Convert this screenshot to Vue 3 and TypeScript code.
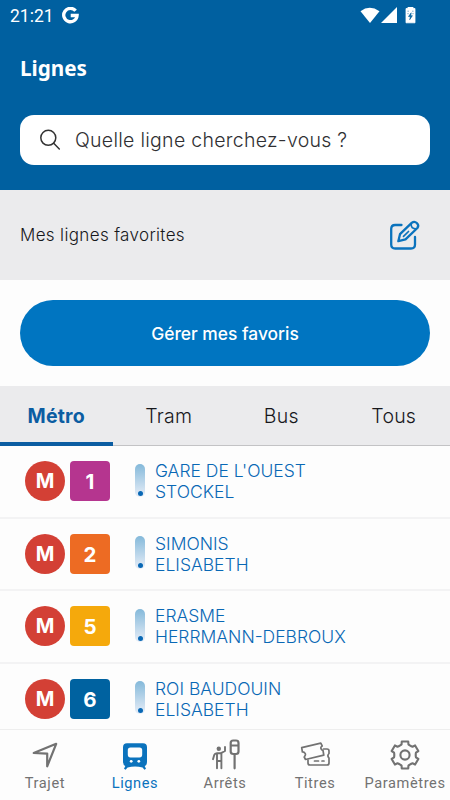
<script setup lang="ts">
import { ref } from 'vue'

interface Line {
  id: string
  color: string
  from: string
  to: string
}

const tabs = ['Métro', 'Tram', 'Bus', 'Tous']
const activeTab = ref('Métro')

const lines: Line[] = [
  { id: '1', color: '#b5358f', from: "GARE DE L'OUEST", to: 'STOCKEL' },
  { id: '2', color: '#ed6b23', from: 'SIMONIS', to: 'ELISABETH' },
  { id: '5', color: '#f5a90c', from: 'ERASME', to: 'HERRMANN-DEBROUX' },
  { id: '6', color: '#0062a0', from: 'ROI BAUDOUIN', to: 'ELISABETH' },
]

// Outline of the six-toothed settings wheel, centred on the origin
function gearPath(): string {
  const profile: [number, number][] = [
    [-24, 10.8], [-18, 11.2], [-13.5, 13.9], [13.5, 13.9], [18, 11.2], [24, 10.8],
  ]
  const points: string[] = []
  for (let tooth = 0; tooth < 6; tooth++) {
    for (const [offset, radius] of profile) {
      const angle = ((tooth * 60 + offset - 90) * Math.PI) / 180
      points.push(`${(radius * Math.cos(angle)).toFixed(2)} ${(radius * Math.sin(angle)).toFixed(2)}`)
    }
  }
  return `M${points.join('L')}Z`
}
const gear = gearPath()
</script>

<template>
  <main class="screen">
    <header class="header">
      <div class="status">
        <span class="clock">21:21</span>
        <svg class="google" viewBox="0 0 16 16" width="17" height="17">
          <path d="M12.8 3.6A6.3 6.3 0 1 0 14.2 8H8.2" fill="none" stroke="#fff" stroke-width="3.1" />
        </svg>
        <svg class="signals" viewBox="0 0 56 18" width="56" height="18">
          <path d="M0.5 4.3Q9.5-2.6 19.5 4.3L10 15.9Z" fill="#fff" />
          <path d="M21 16L37 0V16Z" fill="#fff" />
          <path d="M46 1.5h2V0h5v1.5h2v14.3h-9Z" fill="#fff" stroke="#fff" stroke-width=".8" stroke-linejoin="round" />
          <path d="M51.2 5.8l-2.7 3.7h1.9l-.7 3.2 2.7-4h-1.7ZM47.5 4.2h1.3M52.2 4.2h1.3M48 6v1.2M53 6v1.2" fill="#0062a0" stroke="#0062a0" stroke-width=".6" />
        </svg>
      </div>
      <h1 class="title">Lignes</h1>
      <div class="search">
        <svg viewBox="0 0 22 22" width="22" height="22" fill="none" stroke="#333" stroke-width="1.5" stroke-linecap="round">
          <circle cx="8.3" cy="8.8" r="7.5" />
          <path d="M13.7 14.3L19.3 20" />
        </svg>
        <span>Quelle ligne cherchez-vous ?</span>
      </div>
    </header>

    <section class="favorites">
      <span>Mes lignes favorites</span>
      <svg viewBox="0 0 32 32" width="32" height="32" fill="none" stroke="#0b73bd" stroke-width="2.3" stroke-linecap="round" stroke-linejoin="round">
        <path d="M12.5 6H6.2Q2.2 6 2.2 10V25.5Q2.2 29.5 6.2 29.5H22Q26 29.5 26 25.5V18" />
        <path d="M9.3 22.2L11 15.2L22.7 3.9Q25.3 1.7 27.8 4T28.4 9L16.5 20.4Z" />
        <path d="M22.2 5Q21.7 9.7 27.2 9.9M14.5 17.3L19.5 12.5" stroke-width="1.7" />
      </svg>
    </section>

    <div class="manage">
      <button type="button">Gérer mes favoris</button>
    </div>

    <nav class="tabs">
      <button v-for="tab in tabs" :key="tab" type="button" :class="{ active: tab === activeTab }" @click="activeTab = tab">
        {{ tab }}
      </button>
    </nav>

    <ul class="lines">
      <li v-for="line in lines" :key="line.id">
        <span class="mode">M</span>
        <span class="number" :style="{ background: line.color }">{{ line.id }}</span>
        <span class="direction"><i></i></span>
        <span class="stops">{{ line.from }}<br />{{ line.to }}</span>
      </li>
    </ul>

    <nav class="bottom">
      <a>
        <svg viewBox="0 0 32 32" width="32" height="32" fill="none" stroke="#727272" stroke-width="2.2" stroke-linejoin="round">
          <path d="M4.7 14L27.2 4.8L18.2 27.3V14.6Z" />
        </svg>
        <span>Trajet</span>
      </a>
      <a class="current">
        <svg viewBox="0 0 32 32" width="32" height="32">
          <path fill="#0b73bd" fill-rule="evenodd" d="M8 4.2H24Q28 4.2 28 8.2V22.5Q28 26.5 25.7 27L27 29.7 25.4 30.8 23.6 28.6Q16 26.3 8.6 28.6L6.6 30.8 5 29.7 6.3 27Q4 26 4 22.5V8.2Q4 4.2 8 4.2ZM11.5 8.5Q8.8 8.5 8.8 11V15.5Q8.8 18.5 11.5 18.5H20.5Q23.2 18.5 23.2 15.5V11Q23.2 8.5 20.5 8.5Z" />
          <circle cx="12.2" cy="22.3" r="1.4" fill="#fff" />
          <circle cx="19.8" cy="22.3" r="1.4" fill="#fff" />
        </svg>
        <span>Lignes</span>
      </a>
      <a>
        <svg viewBox="0 0 32 32" width="32" height="32" fill="none" stroke="#727272" stroke-width="1.9" stroke-linecap="round" stroke-linejoin="round">
          <circle cx="9.8" cy="9.7" r="2.2" fill="#727272" stroke="none" />
          <path d="M4 20.2L5.3 15.8Q5.8 14.5 8 14.3H11.5L16 12V8M8 15V29.3M12.4 14.5V29.3M8 22H12.4" />
          <path d="M24.4 15H27Q29.5 15 29.5 12.5V4Q29.5 1.5 27 1.5H24.2Q21.7 1.5 21.7 4V12.5Q21.7 15 24.4 15M21.7 6.5H29.5M25.6 15V29.3" stroke-width="2.2" />
        </svg>
        <span>Arrêts</span>
      </a>
      <a>
        <svg viewBox="0 0 32 32" width="32" height="32" fill="none" stroke="#727272" stroke-width="1.7" stroke-linecap="round" stroke-linejoin="round">
          <path d="M2.7 8.6L21.8 4.2L23.2 6.9Q20.5 8.5 23 10.9L24 11.5L24.8 16.1L6.5 20.5L5.2 18Q7.5 15.5 5.7 13.9Q4.5 12.7 3.4 13Z" />
          <path d="M24.5 10H28Q30 10 30 12V14.5Q27.8 16.7 30 19V24Q30 26 28 26H11Q9 26 9 24V21M15.5 22H19.5M23 22H25" />
        </svg>
        <span>Titres</span>
      </a>
      <a>
        <svg viewBox="-16 -16 32 32" width="32" height="32" fill="none" stroke="#727272" stroke-width="2.1" stroke-linejoin="round">
          <path :d="gear" />
          <circle r="4.6" />
        </svg>
        <span>Paramètres</span>
      </a>
    </nav>
  </main>
</template>

<style>
body {
  margin: 0;
  background: #fdfdfd;
}
</style>

<style scoped>
.screen {
  display: flex;
  flex-direction: column;
  width: 450px;
  height: 800px;
  overflow: hidden;
  background: #fdfdfd;
  font-family: Inter, sans-serif;
  color: #17181c;
}
svg {
  display: block;
  flex: none;
}
button {
  margin: 0;
  border: 0;
  padding: 0;
  background: none;
  font: inherit;
  color: inherit;
}
.header {
  box-sizing: border-box;
  flex: none;
  height: 190px;
  padding: 0 20px;
  background: #0060a0;
  color: #fff;
}
.status {
  display: flex;
  align-items: center;
  height: 31px;
  margin: 0 14px 0 -10px;
}
.clock {
  font: 450 17.5px/32px Roboto, sans-serif;
}
.google {
  margin-left: 8px;
}
.signals {
  margin-left: auto;
}
.title {
  margin: 21px 0 31px;
  font: 700 20.7px/32px "Noto Sans", sans-serif;
}
.search {
  display: flex;
  align-items: center;
  gap: 13px;
  height: 50px;
  padding-left: 20px;
  border-radius: 14px;
  background: #fff;
  color: #303033;
  font-size: 19.5px;
  font-weight: 300;
  letter-spacing: .28px;
}
.favorites {
  display: flex;
  align-items: center;
  justify-content: space-between;
  flex: none;
  height: 90px;
  padding: 0 29px 0 20px;
  background: #ebebed;
  font-size: 17px;
  font-weight: 350;
  letter-spacing: .35px;
}
.manage {
  flex: none;
  height: 66px;
  padding: 20px;
}
.manage button {
  width: 100%;
  height: 66px;
  border-radius: 33px;
  background: #0075c1;
  color: #fff;
  font-size: 17.4px;
  font-weight: 500;
}
.tabs {
  box-sizing: border-box;
  display: grid;
  grid-template-columns: repeat(4, 1fr);
  flex: none;
  height: 60px;
  border-bottom: 1px solid #c3c3c5;
  background: #ebebed;
}
.tabs button {
  box-sizing: border-box;
  height: 60px;
  border-bottom: 4px solid transparent;
  padding-top: 4px;
  font-size: 19.5px;
  font-weight: 350;
  letter-spacing: .2px;
}
.tabs .active {
  border-color: #0b5da2;
  color: #0b5da2;
  font-weight: 700;
}
.lines {
  flex: none;
  height: 283px;
  margin: 0;
  padding: 0;
  overflow: hidden;
  list-style: none;
}
.lines li {
  box-sizing: border-box;
  display: flex;
  align-items: center;
  height: 72.5px;
  padding-left: 25px;
  border-bottom: 2px solid #f3f3f4;
}
.mode,
.number {
  width: 40px;
  height: 40px;
  color: #fff;
  font-size: 20px;
  font-weight: 700;
  line-height: 41px;
  text-align: center;
}
.mode {
  border-radius: 50%;
  background: #d34035;
}
.number {
  margin-left: 5px;
  border-radius: 4px;
  font-size: 20.5px;
}
.direction {
  display: flex;
  align-items: flex-end;
  justify-content: center;
  width: 10px;
  height: 33px;
  margin: 0 10px 2px 25px;
  border-radius: 5px;
  background: linear-gradient(#84b9da, #e8eef8);
}
.direction i {
  width: 5px;
  height: 5px;
  margin-bottom: 1px;
  border-radius: 50%;
  background: #0968b5;
}
.stops {
  color: #0968b5;
  font-size: 17.5px;
  font-weight: 300;
  letter-spacing: 0;
  line-height: 21px;
}
.bottom {
  display: grid;
  grid-template-columns: repeat(5, 1fr);
  flex: none;
  height: 71px;
  box-sizing: border-box;
  border-top: 1px solid #eee;
  color: #727272;
  font: 400 14.6px/18px Roboto, sans-serif;
  letter-spacing: .6px;
}
.bottom a {
  display: flex;
  flex-direction: column;
  align-items: center;
  padding-top: 9px;
  gap: 3px;
}
.bottom .current {
  color: #0b73bd;
}
</style>
